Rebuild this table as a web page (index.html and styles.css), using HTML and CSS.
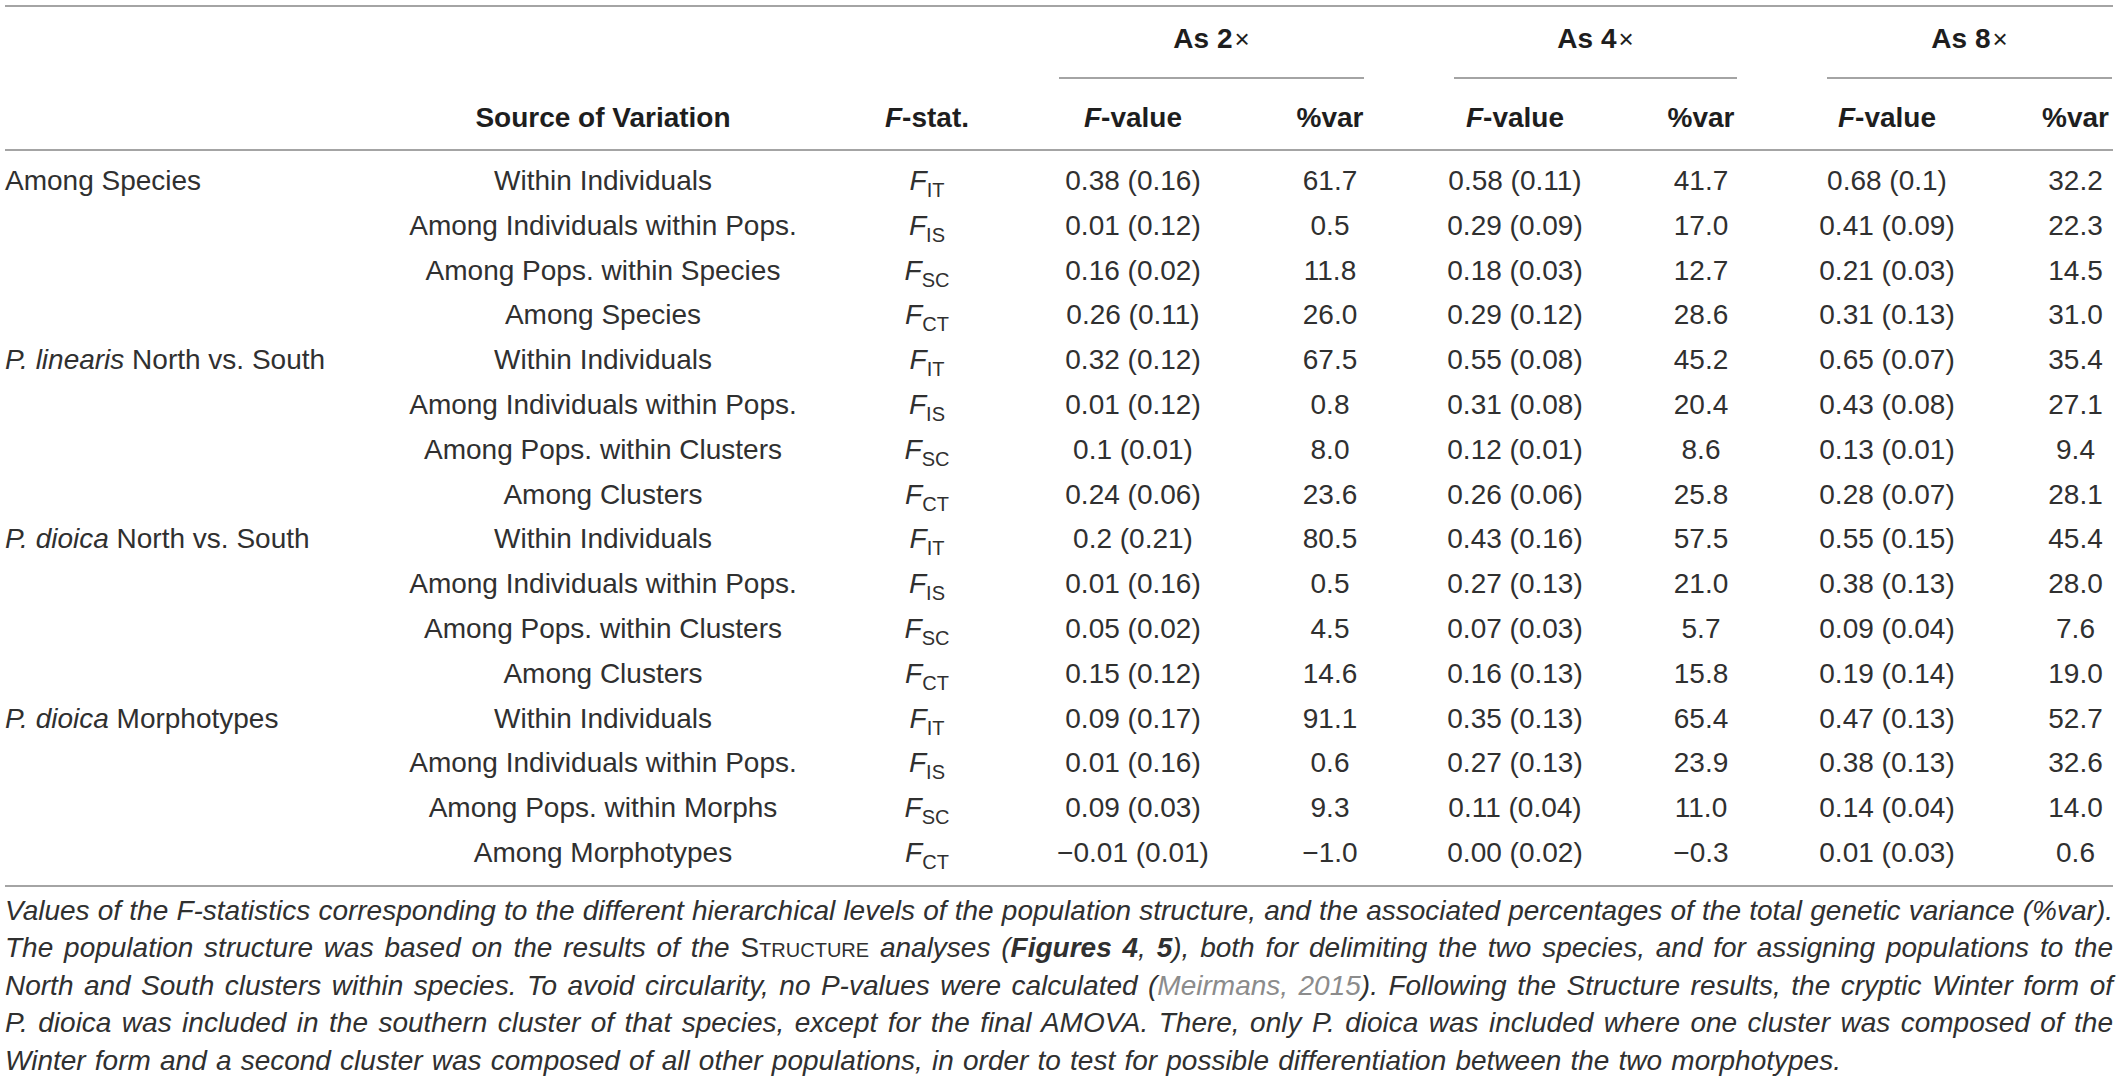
FILE: index.html
```html
<!DOCTYPE html>
<html lang="en">
<head>
<meta charset="utf-8">
<title>AMOVA F-statistics</title>
<link rel="stylesheet" href="styles.css">
</head>
<body>
<div class="page">
  <div class="thead grid">
    <div class="spacer"></div>
    <div class="group g1"><div class="gtitle">As 2<span class="times">×</span></div><div class="underline"></div></div>
    <div class="group g2"><div class="gtitle">As 4<span class="times">×</span></div><div class="underline"></div></div>
    <div class="group g3"><div class="gtitle">As 8<span class="times">×</span></div><div class="underline"></div></div>
    <div class="th"></div>
    <div class="th">Source of Variation</div>
    <div class="th"><i>F</i>-stat.</div>
    <div class="th"><i>F</i>-value</div>
    <div class="th">%var</div>
    <div class="th"><i>F</i>-value</div>
    <div class="th">%var</div>
    <div class="th"><i>F</i>-value</div>
    <div class="th last">%var</div>
  </div>

  <div class="tbody grid">
    <div class="td c1">Among Species</div><div class="td">Within Individuals</div><div class="td"><i>F</i><sub>IT</sub></div><div class="td">0.38 (0.16)</div><div class="td">61.7</div><div class="td">0.58 (0.11)</div><div class="td">41.7</div><div class="td">0.68 (0.1)</div><div class="td last">32.2</div>
    <div class="td c1"></div><div class="td">Among Individuals within Pops.</div><div class="td"><i>F</i><sub>IS</sub></div><div class="td">0.01 (0.12)</div><div class="td">0.5</div><div class="td">0.29 (0.09)</div><div class="td">17.0</div><div class="td">0.41 (0.09)</div><div class="td last">22.3</div>
    <div class="td c1"></div><div class="td">Among Pops. within Species</div><div class="td"><i>F</i><sub>SC</sub></div><div class="td">0.16 (0.02)</div><div class="td">11.8</div><div class="td">0.18 (0.03)</div><div class="td">12.7</div><div class="td">0.21 (0.03)</div><div class="td last">14.5</div>
    <div class="td c1"></div><div class="td">Among Species</div><div class="td"><i>F</i><sub>CT</sub></div><div class="td">0.26 (0.11)</div><div class="td">26.0</div><div class="td">0.29 (0.12)</div><div class="td">28.6</div><div class="td">0.31 (0.13)</div><div class="td last">31.0</div>

    <div class="td c1"><i>P. linearis</i> North vs. South</div><div class="td">Within Individuals</div><div class="td"><i>F</i><sub>IT</sub></div><div class="td">0.32 (0.12)</div><div class="td">67.5</div><div class="td">0.55 (0.08)</div><div class="td">45.2</div><div class="td">0.65 (0.07)</div><div class="td last">35.4</div>
    <div class="td c1"></div><div class="td">Among Individuals within Pops.</div><div class="td"><i>F</i><sub>IS</sub></div><div class="td">0.01 (0.12)</div><div class="td">0.8</div><div class="td">0.31 (0.08)</div><div class="td">20.4</div><div class="td">0.43 (0.08)</div><div class="td last">27.1</div>
    <div class="td c1"></div><div class="td">Among Pops. within Clusters</div><div class="td"><i>F</i><sub>SC</sub></div><div class="td">0.1 (0.01)</div><div class="td">8.0</div><div class="td">0.12 (0.01)</div><div class="td">8.6</div><div class="td">0.13 (0.01)</div><div class="td last">9.4</div>
    <div class="td c1"></div><div class="td">Among Clusters</div><div class="td"><i>F</i><sub>CT</sub></div><div class="td">0.24 (0.06)</div><div class="td">23.6</div><div class="td">0.26 (0.06)</div><div class="td">25.8</div><div class="td">0.28 (0.07)</div><div class="td last">28.1</div>

    <div class="td c1"><i>P. dioica</i> North vs. South</div><div class="td">Within Individuals</div><div class="td"><i>F</i><sub>IT</sub></div><div class="td">0.2 (0.21)</div><div class="td">80.5</div><div class="td">0.43 (0.16)</div><div class="td">57.5</div><div class="td">0.55 (0.15)</div><div class="td last">45.4</div>
    <div class="td c1"></div><div class="td">Among Individuals within Pops.</div><div class="td"><i>F</i><sub>IS</sub></div><div class="td">0.01 (0.16)</div><div class="td">0.5</div><div class="td">0.27 (0.13)</div><div class="td">21.0</div><div class="td">0.38 (0.13)</div><div class="td last">28.0</div>
    <div class="td c1"></div><div class="td">Among Pops. within Clusters</div><div class="td"><i>F</i><sub>SC</sub></div><div class="td">0.05 (0.02)</div><div class="td">4.5</div><div class="td">0.07 (0.03)</div><div class="td">5.7</div><div class="td">0.09 (0.04)</div><div class="td last">7.6</div>
    <div class="td c1"></div><div class="td">Among Clusters</div><div class="td"><i>F</i><sub>CT</sub></div><div class="td">0.15 (0.12)</div><div class="td">14.6</div><div class="td">0.16 (0.13)</div><div class="td">15.8</div><div class="td">0.19 (0.14)</div><div class="td last">19.0</div>

    <div class="td c1"><i>P. dioica</i> Morphotypes</div><div class="td">Within Individuals</div><div class="td"><i>F</i><sub>IT</sub></div><div class="td">0.09 (0.17)</div><div class="td">91.1</div><div class="td">0.35 (0.13)</div><div class="td">65.4</div><div class="td">0.47 (0.13)</div><div class="td last">52.7</div>
    <div class="td c1"></div><div class="td">Among Individuals within Pops.</div><div class="td"><i>F</i><sub>IS</sub></div><div class="td">0.01 (0.16)</div><div class="td">0.6</div><div class="td">0.27 (0.13)</div><div class="td">23.9</div><div class="td">0.38 (0.13)</div><div class="td last">32.6</div>
    <div class="td c1"></div><div class="td">Among Pops. within Morphs</div><div class="td"><i>F</i><sub>SC</sub></div><div class="td">0.09 (0.03)</div><div class="td">9.3</div><div class="td">0.11 (0.04)</div><div class="td">11.0</div><div class="td">0.14 (0.04)</div><div class="td last">14.0</div>
    <div class="td c1"></div><div class="td">Among Morphotypes</div><div class="td"><i>F</i><sub>CT</sub></div><div class="td">−0.01 (0.01)</div><div class="td">−1.0</div><div class="td">0.00 (0.02)</div><div class="td">−0.3</div><div class="td">0.01 (0.03)</div><div class="td last">0.6</div>
  </div>

  <p class="caption">
    <span class="ln">Values of the F-statistics corresponding to the different hierarchical levels of the population structure, and the associated percentages of the total genetic variance (%var).</span>
    <span class="ln">The population structure was based on the results of the <span class="sc">Structure</span> analyses (<b>Figures 4</b>, <b>5</b>), both for delimiting the two species, and for assigning populations to the</span>
    <span class="ln">North and South clusters within species. To avoid circularity, no P-values were calculated (<span class="ref">Meirmans, 2015</span>). Following the Structure results, the cryptic Winter form of</span>
    <span class="ln">P. dioica was included in the southern cluster of that species, except for the final AMOVA. There, only P. dioica was included where one cluster was composed of the</span>
    <span class="ln end">Winter form and a second cluster was composed of all other populations, in order to test for possible differentiation between the two morphotypes.</span>
  </p>
</div>
</body>
</html>
```

FILE: styles.css
```css
:root {
  --rule: #a4a4a4;
  --ink: #303030;
}

* { box-sizing: border-box; }

body {
  margin: 0;
  background: #ffffff;
  color: var(--ink);
  font-family: "Liberation Sans", Arial, Helvetica, sans-serif;
  font-size: 28px;
}

.page {
  width: 2108px;
  margin: 5px 0 0 5px;
}

.grid {
  display: grid;
  grid-template-columns: 362px 472px 176px 236px 158px 212px 160px 212px 120px;
}

/* header */
.thead {
  border-top: 2px solid var(--rule);
  border-bottom: 2px solid var(--rule);
  color: #1e1e1e;
}

.spacer { grid-column: 1 / 4; }

.group {
  grid-column: span 2;
  padding-top: 14px;
  text-align: center;
  font-weight: bold;
}

.g1 { padding-left: 44px; padding-right: 45px; }
.g2 { padding-left: 45px; padding-right: 44px; }
.g3 { padding-left: 46px; padding-right: 1px; }

.gtitle {
  line-height: 36px;
  white-space: nowrap;
}

.times {
  font-weight: normal;
  font-size: 26px;
  margin-left: 2px;
}

.underline {
  margin-top: 20px;
  border-bottom: 2px solid var(--rule);
}

.th {
  padding-top: 21px;
  padding-bottom: 13px;
  line-height: 36px;
  text-align: center;
  font-weight: bold;
  white-space: nowrap;
}

/* body */
.tbody {
  grid-auto-rows: 44.8px;
  padding: 8px 0 9px;
  border-bottom: 2px solid var(--rule);
}

.td {
  line-height: 44.8px;
  text-align: center;
  white-space: nowrap;
}

.c1 {
  text-align: left;
}

.last {
  padding-left: 45px;
}

sub {
  font-size: 20px;
  vertical-align: -7px;
  line-height: 0;
  font-style: normal;
}

/* caption */
.caption {
  margin: 5px 0 0;
  font-style: italic;
  line-height: 37.5px;
}

.ln {
  display: block;
  text-align: justify;
  text-align-last: justify;
}

.ln.end {
  text-align-last: left;
  word-spacing: 1.4px;
}

.sc {
  font-style: normal;
  font-variant: small-caps;
}

.caption b {
  font-weight: bold;
}

.ref {
  color: #8c8c8c;
}
```
